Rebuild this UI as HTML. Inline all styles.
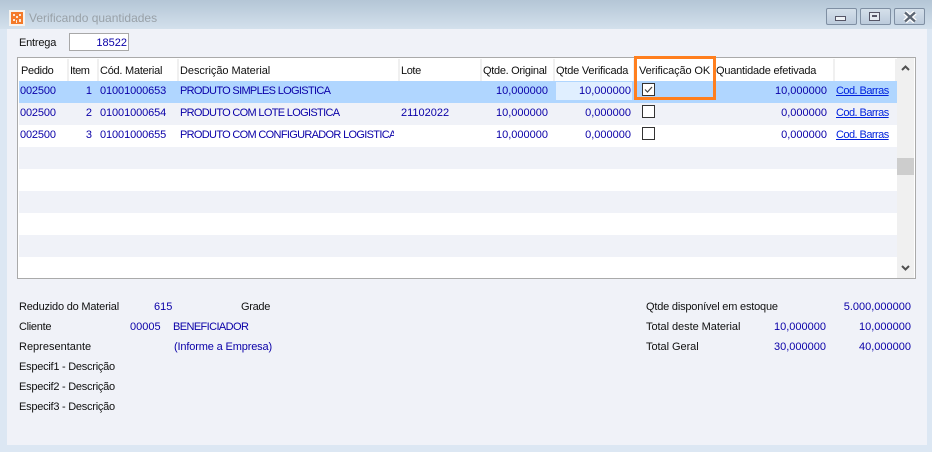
<!DOCTYPE html>
<html><head><meta charset="utf-8">
<style>
html,body{margin:0;padding:0}
body{width:932px;height:452px;overflow:hidden;position:relative;background:#dce7f3;font:11px/14px "Liberation Sans",sans-serif;color:#101010}
.a{position:absolute}
.t{position:absolute;white-space:nowrap;line-height:14px;height:14px;margin-top:1px;letter-spacing:-.2px}
.n{margin-top:0}
.b{color:#0a00a8;letter-spacing:0}
.u{letter-spacing:-.68px}
.r{text-align:right}
.h{position:absolute;top:59px;width:2px;height:22px;background:#f0f0f0}
.row{position:absolute;left:19px;width:878px;height:22px}
.btn{position:absolute;top:8px;width:31px;height:17px;box-sizing:border-box;border:1px solid #7f8fa3;border-radius:2px;background:linear-gradient(#d5e0ea,#bccbdc)}
.cb{position:absolute;left:642px;width:11px;height:11px;border:1px solid #333;background:#fff}
.lnk{position:absolute;left:836px;color:#0022dd;text-decoration:underline;white-space:nowrap;line-height:14px;margin-top:1px;letter-spacing:-.55px}
</style></head><body>
<div class="a" style="left:0;top:0;width:932px;height:29px;background:linear-gradient(#b4c6d6,#d3e0ec)"></div>
<div class="a" style="left:7px;top:29px;width:920px;height:416px;background:#f0f2f8"></div>

<svg class="a" style="left:9px;top:10px" width="16" height="16" viewBox="0 0 16 16"><rect width="16" height="16" fill="#f6f3ef"/><rect x="2" y="2" width="12" height="12" fill="#f47a2a"/><path d="M4 4h2v2H4zM10 4h2v2h-2zM7 6h2v2H7zM4 9h2v2H4zM10 9h2v3h-2zM7 10h1v3H7z" fill="#fde7d6"/></svg>
<div class="t n" style="left:29px;top:11px;font-size:12px;color:#99a1a8;letter-spacing:0">Verificando quantidades</div>

<div class="btn" style="left:826px"><div class="a" style="left:8px;top:7px;width:9px;height:3px;border:1px solid #556;background:#eef2f6"></div></div>
<div class="btn" style="left:860px"><div class="a" style="left:8px;top:3px;width:9px;height:7px;border:1px solid #556;background:#e4eaf1"></div><div class="a" style="left:11px;top:6px;width:5px;height:2px;background:#556"></div></div>
<div class="btn" style="left:894px"><svg class="a" style="left:8px;top:2px" width="14" height="12"><path d="M2 1.5l10 9M12 1.5l-10 9" stroke="#fff" stroke-width="5"/><path d="M2 1.5l10 9M12 1.5l-10 9" stroke="#5c6673" stroke-width="2.4"/></svg></div>

<div class="t n" style="left:19px;top:36px">Entrega</div>
<div class="a" style="left:69px;top:33px;width:58px;height:16px;border:1px solid #a8a8a8;background:#fff"></div>
<div class="t b r n" style="left:69px;top:36px;width:58px">18522</div>

<!-- grid -->
<div class="a" style="left:17px;top:57px;width:897px;height:220px;border:1px solid #aaa;background:#fff"></div>
<div class="row" style="top:81px;background:#b0d6ff"></div>
<div class="row" style="top:103px;background:#f0f2f8"></div>
<div class="row" style="top:147px;background:#f0f2f8"></div>
<div class="row" style="top:191px;background:#f0f2f8"></div>
<div class="row" style="top:235px;background:#f0f2f8"></div>
<div class="a" style="left:556px;top:82px;width:76px;height:18px;background:#e0efff"></div>

<div class="h" style="left:67px"></div><div class="h" style="left:97px"></div><div class="h" style="left:177px"></div><div class="h" style="left:398px"></div><div class="h" style="left:480px"></div><div class="h" style="left:553px"></div><div class="h" style="left:633px"></div><div class="h" style="left:833px"></div><div class="h" style="left:895px"></div>

<div class="t" style="left:21px;top:63px;letter-spacing:-.3px">Pedido</div>
<div class="t" style="left:70px;top:63px;letter-spacing:-.5px">Item</div>
<div class="t" style="left:100px;top:63px;letter-spacing:-.25px">Cód. Material</div>
<div class="t" style="left:180px;top:63px;letter-spacing:-.05px">Descrição Material</div>
<div class="t" style="left:401px;top:63px;letter-spacing:-.4px">Lote</div>
<div class="t" style="left:483px;top:63px;letter-spacing:-.3px">Qtde. Original</div>
<div class="t" style="left:556px;top:63px">Qtde Verificada</div>
<div class="t" style="left:639px;top:63px;letter-spacing:-.12px">Verificação OK</div>
<div class="t" style="left:716px;top:63px;letter-spacing:-.22px">Quantidade efetivada</div>

<!-- row 1 -->
<div class="t b" style="left:20px;top:83px;letter-spacing:-.15px">002500</div>
<div class="t b r" style="left:70px;top:83px;width:22px">1</div>
<div class="t b" style="left:100px;top:83px;letter-spacing:-.1px">01001000653</div>
<div class="t b u" style="left:180px;top:83px">PRODUTO SIMPLES LOGISTICA</div>
<div class="t b r" style="left:480px;top:83px;width:68px">10,000000</div>
<div class="t b r" style="left:560px;top:83px;width:71px">10,000000</div>
<div class="cb" style="top:83px"></div>
<svg class="a" style="left:642px;top:83px" width="13" height="13"><path d="M3 6.5l2.5 2.5 4.5-5" fill="none" stroke="#444" stroke-width="1.2"/></svg>
<div class="t b r" style="left:720px;top:83px;width:107px">10,000000</div>
<div class="lnk" style="top:83px">Cod. Barras</div>
<!-- row 2 -->
<div class="t b" style="left:20px;top:105px;letter-spacing:-.15px">002500</div>
<div class="t b r" style="left:70px;top:105px;width:22px">2</div>
<div class="t b" style="left:100px;top:105px;letter-spacing:-.1px">01001000654</div>
<div class="t b u" style="left:180px;top:105px">PRODUTO COM LOTE LOGISTICA</div>
<div class="t b" style="left:401px;top:105px">21102022</div>
<div class="t b r" style="left:480px;top:105px;width:68px">10,000000</div>
<div class="t b r" style="left:560px;top:105px;width:71px">0,000000</div>
<div class="cb" style="top:105px"></div>
<div class="t b r" style="left:720px;top:105px;width:107px">0,000000</div>
<div class="lnk" style="top:105px">Cod. Barras</div>
<!-- row 3 -->
<div class="t b" style="left:20px;top:127px;letter-spacing:-.15px">002500</div>
<div class="t b r" style="left:70px;top:127px;width:22px">3</div>
<div class="t b" style="left:100px;top:127px;letter-spacing:-.1px">01001000655</div>
<div class="t b u" style="left:180px;top:127px;width:214px;overflow:hidden">PRODUTO COM CONFIGURADOR LOGISTICA</div>
<div class="t b r" style="left:480px;top:127px;width:68px">10,000000</div>
<div class="t b r" style="left:560px;top:127px;width:71px">0,000000</div>
<div class="cb" style="top:127px"></div>
<div class="t b r" style="left:720px;top:127px;width:107px">0,000000</div>
<div class="lnk" style="top:127px">Cod. Barras</div>

<!-- scrollbar -->
<div class="a" style="left:897px;top:58px;width:17px;height:220px;background:#f0f0f0"></div>
<div class="a" style="left:897px;top:158px;width:17px;height:17px;background:#cdcdcd"></div>
<svg class="a" style="left:897px;top:60px" width="17" height="17"><path d="M5 10l3.5-3.5L12 10" fill="none" stroke="#505050" stroke-width="2"/></svg>
<svg class="a" style="left:897px;top:260px" width="17" height="17"><path d="M5 6l3.5 3.5L12 6" fill="none" stroke="#505050" stroke-width="2"/></svg>

<!-- highlight -->
<div class="a" style="left:634px;top:56px;width:76px;height:38px;border:3px solid #ff7f1e"></div>

<!-- bottom -->
<div class="t" style="left:19px;top:299px">Reduzido do Material</div>
<div class="t b" style="left:154px;top:299px">615</div>
<div class="t" style="left:241px;top:299px;letter-spacing:-.3px">Grade</div>
<div class="t" style="left:19px;top:319px;letter-spacing:-.3px">Cliente</div>
<div class="t b" style="left:130px;top:319px">00005</div>
<div class="t b u" style="left:173px;top:319px;letter-spacing:-.6px">BENEFICIADOR</div>
<div class="t" style="left:19px;top:339px;letter-spacing:0">Representante</div>
<div class="t b" style="left:174px;top:339px;letter-spacing:-.15px">(Informe a Empresa)</div>
<div class="t" style="left:19px;top:359px;letter-spacing:-.25px">Especif1 - Descrição</div>
<div class="t" style="left:19px;top:379px;letter-spacing:-.25px">Especif2 - Descrição</div>
<div class="t" style="left:19px;top:399px;letter-spacing:-.25px">Especif3 - Descrição</div>

<div class="t" style="left:646px;top:299px">Qtde disponível em estoque</div>
<div class="t b r" style="left:811px;top:299px;width:100px">5.000,000000</div>
<div class="t" style="left:646px;top:319px;letter-spacing:-.05px">Total deste Material</div>
<div class="t b r" style="left:756px;top:319px;width:70px">10,000000</div>
<div class="t b r" style="left:841px;top:319px;width:70px">10,000000</div>
<div class="t" style="left:646px;top:339px;letter-spacing:-.05px">Total Geral</div>
<div class="t b r" style="left:756px;top:339px;width:70px">30,000000</div>
<div class="t b r" style="left:841px;top:339px;width:70px">40,000000</div>
</body></html>
